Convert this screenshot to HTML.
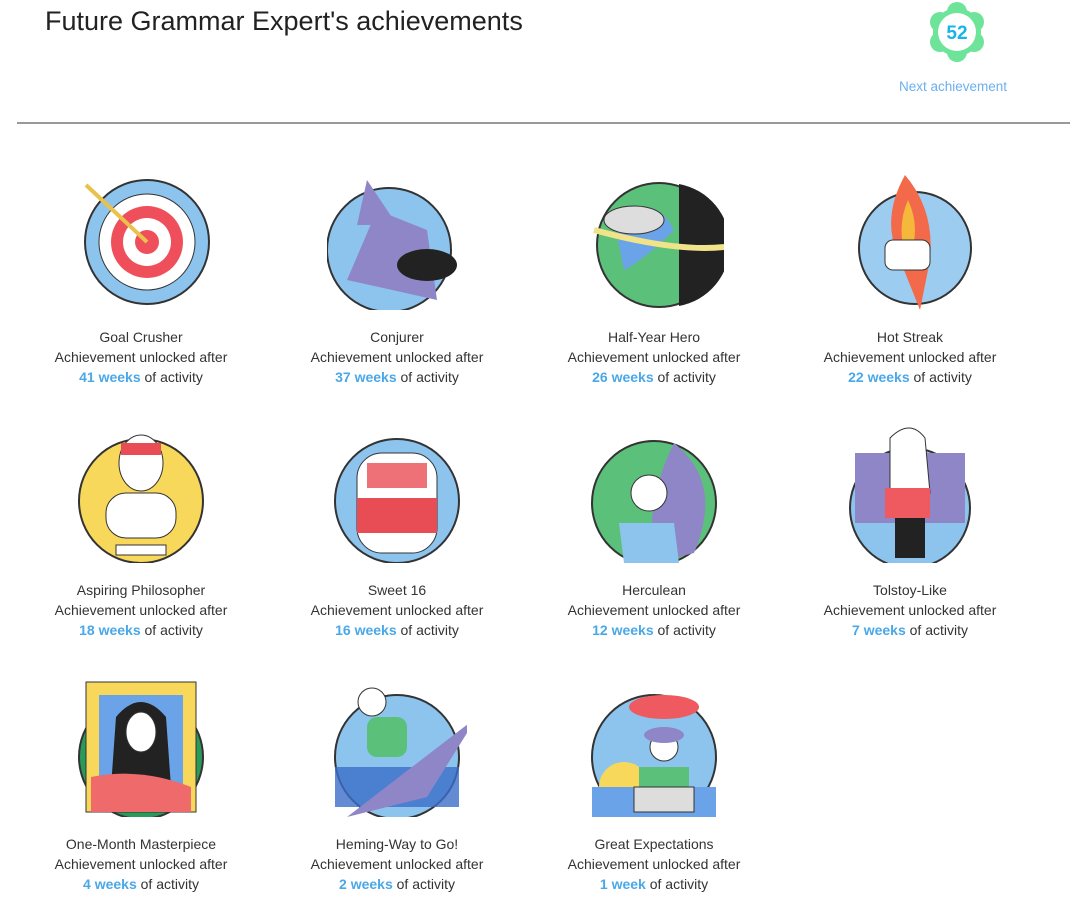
<!DOCTYPE html>
<html><head><style>
body{margin:0;width:1085px;height:902px;background:#fff;font-family:"Liberation Sans",Arial,sans-serif;position:relative;overflow:hidden}
h1{position:absolute;left:45px;top:6px;margin:0;font-weight:normal;font-size:27px;color:#222}
.hr{position:absolute;left:17px;top:122px;width:1053px;height:2px;background:#999}
.next{position:absolute;left:899px;top:79px;font-size:13.5px;color:#6ab0f0}
.badge{position:absolute;left:927px;top:2px}
.cell{position:absolute;width:256px;text-align:center;font-size:14px;color:#333;line-height:20px}
.cell svg{display:block;margin:10px auto 17px}
.b{color:#4aa8e8;font-weight:bold}
</style></head><body>
<h1>Future Grammar Expert's achievements</h1>
<svg class="badge" width="60" height="60" viewBox="0 0 60 60"><g fill="#6ee39a"><circle cx="30" cy="30" r="24"/><circle cx="30" cy="10" r="10"/><circle cx="47" cy="20" r="10"/><circle cx="47" cy="40" r="10"/><circle cx="30" cy="50" r="10"/><circle cx="13" cy="40" r="10"/><circle cx="13" cy="20" r="10"/></g><circle cx="30" cy="30" r="19" fill="#fff"/><text x="30" y="37" text-anchor="middle" font-family="Liberation Sans" font-weight="bold" font-size="19" fill="#1ab5e8">52</text></svg>
<div class="next">Next achievement</div>
<div class="hr"></div>

<div class="cell" style="left:13px;top:160px"><svg width="140" height="140"><circle cx="76" cy="72" r="62" fill="#8cc4ee" stroke="#333" stroke-width="2"/><circle cx="76" cy="72" r="48" fill="#fff" stroke="#333"/><circle cx="76" cy="72" r="36" fill="#ef4f5a"/><circle cx="76" cy="72" r="24" fill="#fff"/><circle cx="76" cy="72" r="12" fill="#ef4f5a"/><line x1="15" y1="15" x2="76" y2="72" stroke="#e8c24a" stroke-width="4"/></svg>Goal Crusher<br>Achievement unlocked after<br><span class="b">41 weeks</span> of activity</div>
<div class="cell" style="left:269px;top:160px"><svg width="140" height="140"><circle cx="62" cy="80" r="62" fill="#8cc4ee" stroke="#333" stroke-width="2"/><path d="M20 110 L50 40 L100 60 L110 130 Z" fill="#8f86c8"/><ellipse cx="100" cy="95" rx="30" ry="16" fill="#222"/><polygon points="40,10 70,55 30,55" fill="#8f86c8"/></svg>Conjurer<br>Achievement unlocked after<br><span class="b">37 weeks</span> of activity</div>
<div class="cell" style="left:526px;top:160px"><svg width="140" height="140"><circle cx="75" cy="75" r="62" fill="#5bc07a" stroke="#333" stroke-width="2"/><path d="M95 14 A62 62 0 0 1 95 136 Z" fill="#222"/><path d="M30 50 Q70 20 90 60 Q60 90 40 100Z" fill="#6aa3e8"/><ellipse cx="50" cy="50" rx="30" ry="14" fill="#ddd" stroke="#333"/><path d="M10 60 Q120 90 170 70" stroke="#f0e38a" stroke-width="6" fill="none"/></svg>Half-Year Hero<br>Achievement unlocked after<br><span class="b">26 weeks</span> of activity</div>
<div class="cell" style="left:782px;top:160px"><svg width="140" height="140"><circle cx="75" cy="78" r="56" fill="#9ccdf0" stroke="#333" stroke-width="2"/><path d="M65 5 Q40 50 60 90 L80 140 L90 90 Q95 40 65 5Z" fill="#f26a4a"/><path d="M68 30 Q55 60 68 90 Q82 60 68 30Z" fill="#f5b83a"/><rect x="45" y="70" width="45" height="30" rx="8" fill="#fff" stroke="#333"/></svg>Hot Streak<br>Achievement unlocked after<br><span class="b">22 weeks</span> of activity</div>

<div class="cell" style="left:13px;top:413px"><svg width="140" height="140"><circle cx="70" cy="78" r="62" fill="#f8d85a" stroke="#333" stroke-width="2"/><ellipse cx="70" cy="40" rx="22" ry="28" fill="#fff" stroke="#333"/><rect x="35" y="70" width="70" height="45" rx="20" fill="#fff" stroke="#333"/><rect x="50" y="20" width="40" height="12" fill="#e84d55"/><rect x="45" y="122" width="50" height="10" fill="#fff" stroke="#333"/></svg>Aspiring Philosopher<br>Achievement unlocked after<br><span class="b">18 weeks</span> of activity</div>
<div class="cell" style="left:269px;top:413px"><svg width="140" height="140"><circle cx="70" cy="78" r="62" fill="#8cc4ee" stroke="#333" stroke-width="2"/><rect x="30" y="30" width="80" height="100" rx="25" fill="#fff" stroke="#333"/><rect x="30" y="75" width="80" height="35" fill="#e84d55"/><rect x="40" y="40" width="60" height="25" fill="#e84d55" opacity=".8"/></svg>Sweet 16<br>Achievement unlocked after<br><span class="b">16 weeks</span> of activity</div>
<div class="cell" style="left:526px;top:413px"><svg width="140" height="140"><circle cx="70" cy="80" r="62" fill="#5bc07a" stroke="#333" stroke-width="2"/><path d="M90 20 Q140 60 110 130 L70 140 Q60 80 90 20Z" fill="#8f86c8"/><path d="M35 100 L90 100 L95 140 L40 140Z" fill="#8cc4ee"/><circle cx="65" cy="70" r="18" fill="#fff" stroke="#333"/></svg>Herculean<br>Achievement unlocked after<br><span class="b">12 weeks</span> of activity</div>
<div class="cell" style="left:782px;top:413px"><svg width="140" height="140"><circle cx="70" cy="85" r="60" fill="#8cc4ee" stroke="#333" stroke-width="2"/><rect x="15" y="30" width="110" height="70" fill="#8f86c8"/><path d="M50 15 Q70 -5 85 15 L90 70 L50 70Z" fill="#fff" stroke="#333"/><rect x="45" y="65" width="45" height="30" fill="#ef5a60"/><rect x="55" y="95" width="30" height="40" fill="#222"/></svg>Tolstoy-Like<br>Achievement unlocked after<br><span class="b">7 weeks</span> of activity</div>

<div class="cell" style="left:13px;top:667px"><svg width="140" height="140"><circle cx="70" cy="80" r="62" fill="#2a9a5a" stroke="#333" stroke-width="2"/><rect x="15" y="5" width="110" height="130" fill="#f8d85a" stroke="#333"/><rect x="28" y="18" width="84" height="104" fill="#6aa3e8"/><path d="M45 40 Q70 10 95 40 L100 110 L40 110Z" fill="#222"/><ellipse cx="70" cy="55" rx="15" ry="20" fill="#fff" stroke="#333"/><path d="M20 100 Q70 90 120 110 L120 135 L20 135Z" fill="#ef6a6a"/></svg>One-Month Masterpiece<br>Achievement unlocked after<br><span class="b">4 weeks</span> of activity</div>
<div class="cell" style="left:269px;top:667px"><svg width="140" height="140"><circle cx="70" cy="80" r="62" fill="#8cc4ee" stroke="#333" stroke-width="2"/><rect x="8" y="90" width="124" height="40" fill="#3b6ec8" opacity=".8"/><path d="M20 140 L150 40 L100 120 Z" fill="#8f86c8"/><rect x="40" y="40" width="40" height="40" rx="10" fill="#5bc07a"/><circle cx="45" cy="25" r="14" fill="#fff" stroke="#333"/></svg>Heming-Way to Go!<br>Achievement unlocked after<br><span class="b">2 weeks</span> of activity</div>
<div class="cell" style="left:526px;top:667px"><svg width="140" height="140"><circle cx="70" cy="80" r="62" fill="#8cc4ee" stroke="#333" stroke-width="2"/><circle cx="40" cy="110" r="25" fill="#f8d85a"/><rect x="8" y="110" width="124" height="30" fill="#6aa3e8"/><ellipse cx="80" cy="30" rx="35" ry="12" fill="#ef5a60"/><rect x="55" y="90" width="50" height="20" fill="#5bc07a"/><rect x="50" y="110" width="60" height="25" fill="#ddd" stroke="#333"/><circle cx="80" cy="70" r="14" fill="#fff" stroke="#333"/><ellipse cx="80" cy="58" rx="20" ry="8" fill="#8f86c8"/></svg>Great Expectations<br>Achievement unlocked after<br><span class="b">1 week</span> of activity</div>
</body></html>
